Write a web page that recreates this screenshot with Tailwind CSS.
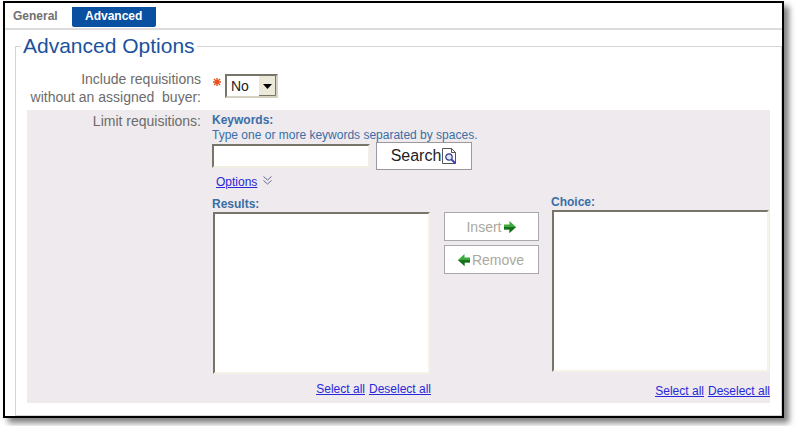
<!DOCTYPE html>
<html lang="en">
<head>
    <meta charset="UTF-8">
    <meta name="viewport" content="width=device-width, initial-scale=1.0">
    <title>Advanced Options</title>
    <script src="https://cdn.jsdelivr.net/npm/@tailwindcss/browser@4"></script>
</head>
<body class="bg-white pl-[3px] pt-px pr-3 pb-2 font-['Liberation_Sans',Arial,sans-serif] text-xs text-[#3a6ea5]">
    <div class="border-2 border-black shadow-[5px_5px_6px_rgba(0,0,0,0.5)]">
        <!-- tabs -->
        <nav class="flex items-start border-b-2 border-[#dcdcdc] pt-1 pl-2 h-[27px] font-bold">
            <a href="#general" class="leading-[18px] text-[#707070]">General</a>
            <a href="#advanced" class="ml-[14px] w-[84px] h-5 leading-[18px] rounded-b-xs bg-[#0a50a0] text-center text-white">Advanced</a>
        </nav>

        <form class="pl-[10px]">
            <fieldset class="border border-[#d4d4d4] px-[11px] pb-3">
                <legend class="-ml-[6px] px-[2px] text-[21px] leading-[32px] text-[#1a529c]">Advanced Options</legend>

                <div class="flex h-10 mt-2">
                    <label for="include" class="w-[174px] text-right text-sm leading-[18px] text-[#6c6c6c] whitespace-pre">Include requisitions
without an assigned  buyer:</label>
                    <svg class="ml-3 mt-2 w-2 h-2" viewBox="0 0 8 8" fill="none" stroke="#e8501c" stroke-width="1.4"><path d="M4 0v8M0 4h8M1 1l6 6M7 1L1 7"/></svg>
                    <div class="relative ml-1 mt-1 w-[53px] h-6">
                        <select id="include" class="appearance-none w-full h-full border-2 border-[#d6d2c2] border-t-[#77746a] border-l-[#77746a] bg-white pl-1 text-sm leading-5 text-[#222]">
                            <option>No</option>
                            <option>Yes</option>
                        </select>
                        <svg class="absolute right-[2px] top-[2px] w-[17px] h-5 pointer-events-none" viewBox="0 0 17 20"><path fill="#ece9d8" d="M0 0h17v20H0z"/><path stroke="#77746a" fill="none" d="M0 19.500h16.500V0"/><path d="M4 8h9l-4.500 5z"/></svg>
                    </div>
                </div>

                <div class="flex bg-[#eeeaee] h-[293px]">
                    <div class="w-[174px] pt-[2px] text-right text-sm leading-[18px] text-[#6c6c6c]">Limit requisitions:</div>
                    <div class="flex-1 ml-[11px] pt-[2px]">
                        <label for="keywords" class="block font-bold leading-4">Keywords:</label>
                        <p class="leading-[14px]">Type one or more keywords separated by spaces.</p>
                        <div class="flex items-center gap-[6px]">
                            <input id="keywords" type="text" class="w-[158px] h-6 border-2 border-[#f1eee2] border-t-[#77746a] border-l-[#77746a] bg-white px-1">
                            <button type="button" class="flex items-center justify-center w-24 h-7 border border-[#9a9a9e] bg-white text-base text-[#222]">Search
                                <svg class="w-4 h-4" viewBox="0 0 16 16" fill="none"><path d="M1.500 .5h9l4 4v11h-13z" fill="#fff" stroke="#555"/><path d="M10.500 .5v4h4" stroke="#555"/><circle cx="8" cy="9" r="3.200" fill="#dfe8f6" stroke="#34348c" stroke-width="1.200"/><path d="M10.500 11.500l4 4" stroke="#4141b5" stroke-width="2"/></svg>
                            </button>
                        </div>
                        <div class="flex items-center gap-[6px] h-5 pl-1 mt-[2px]">
                            <a href="#options" class="text-[#2828d8] underline">Options</a>
                            <svg class="w-[9px] h-[9px] -mt-1" viewBox="0 0 9 9" fill="none" stroke="#6a6a92"><path d="M.5 .5l4 3.500 4-3.500M.5 4.500l4 3.500 4-3.500"/></svg>
                        </div>
                        <div class="flex justify-between">
                            <div class="w-[219px] pt-1">
                                <label for="results" class="block font-bold leading-4">Results:</label>
                                <select id="results" multiple size="8" class="block w-[217px] h-[162px] ml-px border-2 border-[#f5f2e8] border-t-[#77746a] border-l-[#77746a] bg-white"></select>
                                <div class="flex justify-end gap-1 mt-1 leading-[22px] text-[#2828d8] underline">
                                    <a href="#results-all">Select all</a>
                                    <a href="#results-none">Deselect all</a>
                                </div>
                            </div>
                            <div class="flex flex-col gap-1 pt-5 text-sm text-[#aaa99c]">
                                <button type="button" class="flex items-center justify-center gap-[2px] w-[95px] h-[29px] border border-[#a8a8ae] bg-white">Insert
                                    <svg class="w-3 h-3" viewBox="0 0 12 12"><path fill="#3aaa3c" d="M0 3.500h5.500V0L12 6l-6.500 6V8.500H0z"/><path fill="#176e1c" d="M0 6h12l-6.500 6V8.500H0z"/></svg>
                                </button>
                                <button type="button" class="flex items-center justify-center gap-[2px] w-[95px] h-[29px] border border-[#a8a8ae] bg-white">
                                    <svg class="w-3 h-3" viewBox="0 0 12 12"><path fill="#3aaa3c" d="M12 3.500H6.500V0L0 6l6.500 6V8.500H12z"/><path fill="#176e1c" d="M12 6H0l6.500 6V8.500H12z"/></svg>
                                    Remove</button>
                            </div>
                            <div class="w-[219px] pt-[2px]">
                                <label for="choice" class="block font-bold leading-4">Choice:</label>
                                <select id="choice" multiple size="8" class="block w-[217px] h-[162px] ml-px border-2 border-[#f5f2e8] border-t-[#77746a] border-l-[#77746a] bg-white"></select>
                                <div class="flex justify-end gap-1 mt-2 leading-[22px] text-[#2828d8] underline">
                                    <a href="#choice-all">Select all</a>
                                    <a href="#choice-none">Deselect all</a>
                                </div>
                            </div>
                        </div>
                    </div>
                </div>
            </fieldset>
        </form>
    </div>
</body>
</html>
